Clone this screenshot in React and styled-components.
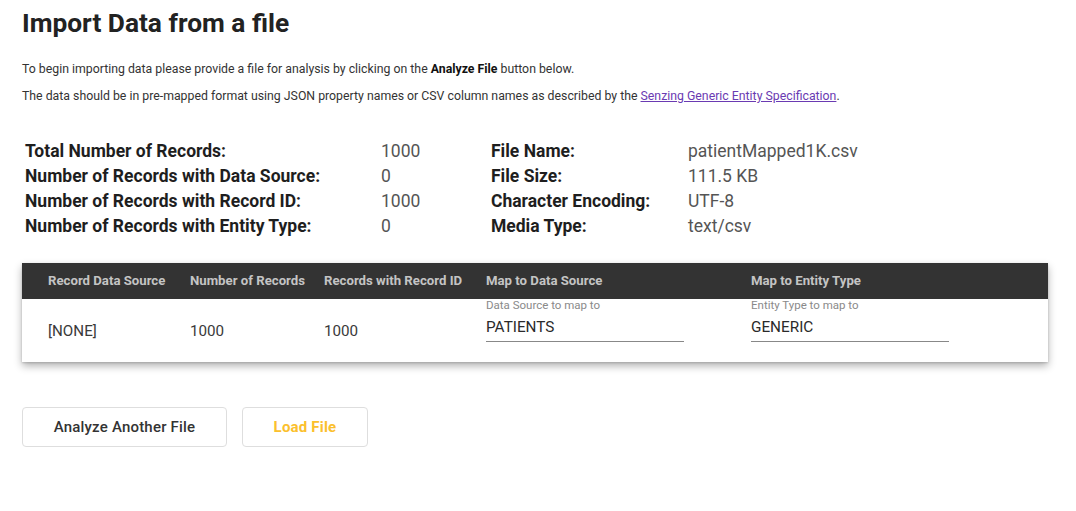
import React from "react";
import styled, { createGlobalStyle } from "styled-components";

const Global = createGlobalStyle`
  html, body { margin: 0; padding: 0; background: #fff; }
  body { font-family: Roboto, "Noto Sans", sans-serif; color: #212121; }
`;

const Page = styled.div`
  padding: 5px 22px 40px 22px;
`;

const Title = styled.h1`
  margin: 0;
  font-size: 26.3px;
  font-weight: 700;
  line-height: 36px;
  color: #222;
`;

const Para = styled.p`
  margin: ${(p) => p.$mt || 0}px 0 0 0;
  font-size: 12.3px;
  line-height: 14px;
  color: #333;
  b { font-weight: 700; color: #111; }
  a { color: #6a3ab2; text-decoration: underline; }
`;

const Summary = styled.div`
  margin-top: 35px;
  padding-left: 3px;
  display: grid;
  grid-template-columns: 356px 110px 197px auto;
  grid-auto-rows: 25px;
  align-items: center;
  font-size: 17.5px;
`;

const Label = styled.div`
  font-weight: 700;
  color: #1e1e1e;
`;

const Value = styled.div`
  color: #555;
`;

const Card = styled.div`
  margin-top: 25px;
  width: 1026px;
  background: #fff;
  box-shadow: 0 4px 8px rgba(0, 0, 0, 0.3), 0 1px 2px rgba(0,0,0,0.15);
`;

const Row = styled.div`
  display: grid;
  grid-template-columns: 142px 134px 162px 265px 1fr;
  padding-left: 26px;
  align-items: center;
`;

const HeadRow = styled(Row)`
  background: #333333;
  height: 36px;
`;

const HeadCell = styled.div`
  color: #c4c4c4;
  font-size: 13.2px;
  font-weight: 700;
  padding-bottom: 1px;
`;

const BodyRow = styled(Row)`
  height: 63px;
`;

const Cell = styled.div`
  font-size: 15.2px;
  color: #3a3a3a;
`;

const Field = styled.div`
  width: 198px;
  align-self: start;
  display: flex;
  flex-direction: column;
`;

const FieldLabel = styled.div`
  font-size: 11.5px;
  color: #8a8a8a;
  line-height: 12px;
`;

const FieldValue = styled.div`
  font-size: 15.3px;
  font-weight: 400;
  color: #2a2a2a;
  line-height: 18px;
  margin-top: 7px;
  padding-bottom: 5px;
  border-bottom: 1px solid #888;
`;

const Buttons = styled.div`
  margin-top: 45px;
  display: flex;
  gap: 15px;
`;

const Button = styled.button`
  height: 40px;
  width: ${(p) => p.$w}px;
  background: #fff;
  border: 1px solid #dedede;
  border-radius: 4px;
  font-family: Roboto, sans-serif;
  font-size: 15px;
  font-weight: ${(p) => (p.$accent ? 700 : 500)};
  color: ${(p) => (p.$accent ? "#fbc02d" : "#333")};
  letter-spacing: 0.2px;
  cursor: pointer;
`;

const summary = [
  ["Total Number of Records:", "1000", "File Name:", "patientMapped1K.csv"],
  ["Number of Records with Data Source:", "0", "File Size:", "111.5 KB"],
  ["Number of Records with Record ID:", "1000", "Character Encoding:", "UTF-8"],
  ["Number of Records with Entity Type:", "0", "Media Type:", "text/csv"],
];

export default function App() {
  return (
    <>
      <Global />
      <Page>
        <Title>Import Data from a file</Title>
        <Para $mt={21}>
          To begin importing data please provide a file for analysis by clicking on the <b>Analyze File</b> button below.
        </Para>
        <Para $mt={13}>
          The data should be in pre-mapped format using JSON property names or CSV column names as described by the{" "}
          <a href="#">Senzing Generic Entity Specification</a>.
        </Para>
        <Summary>
          {summary.map((r) => (
            <React.Fragment key={r[0]}>
              <Label>{r[0]}</Label>
              <Value>{r[1]}</Value>
              <Label>{r[2]}</Label>
              <Value>{r[3]}</Value>
            </React.Fragment>
          ))}
        </Summary>
        <Card>
          <HeadRow>
            <HeadCell>Record Data Source</HeadCell>
            <HeadCell>Number of Records</HeadCell>
            <HeadCell>Records with Record ID</HeadCell>
            <HeadCell>Map to Data Source</HeadCell>
            <HeadCell>Map to Entity Type</HeadCell>
          </HeadRow>
          <BodyRow>
            <Cell>[NONE]</Cell>
            <Cell>1000</Cell>
            <Cell>1000</Cell>
            <Field>
              <FieldLabel>Data Source to map to</FieldLabel>
              <FieldValue>PATIENTS</FieldValue>
            </Field>
            <Field>
              <FieldLabel>Entity Type to map to</FieldLabel>
              <FieldValue>GENERIC</FieldValue>
            </Field>
          </BodyRow>
        </Card>
        <Buttons>
          <Button $w={205}>Analyze Another File</Button>
          <Button $w={126} $accent>Load File</Button>
        </Buttons>
      </Page>
    </>
  );
}
